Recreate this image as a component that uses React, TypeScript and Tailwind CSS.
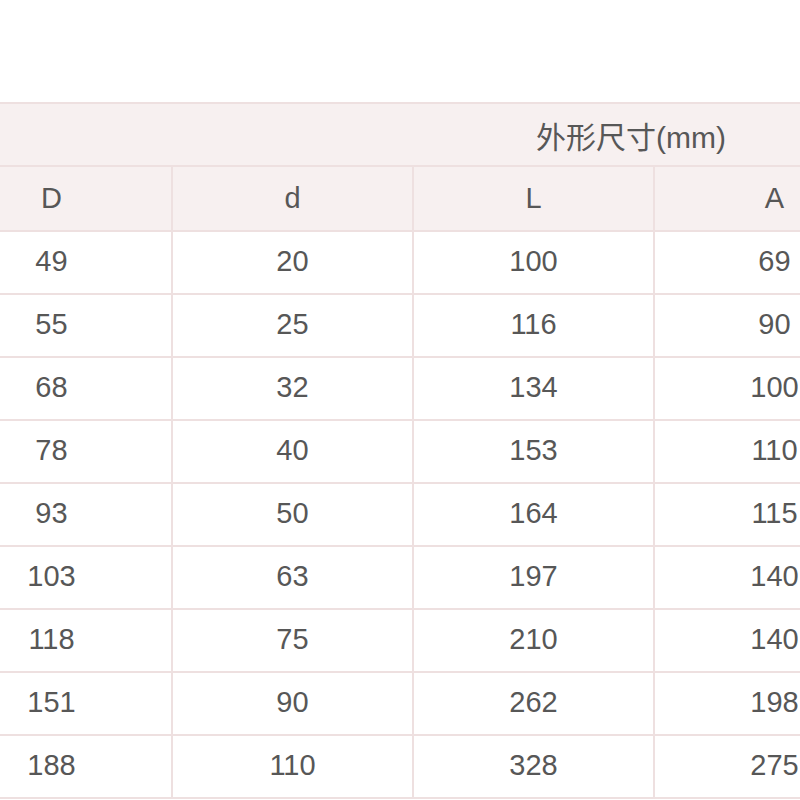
const heads = ['D', 'd', 'L', 'A', 'B', 'H'];

const rows = [
  ['49', '20', '100', '69', '', ''],
  ['55', '25', '116', '90', '', ''],
  ['68', '32', '134', '100', '', ''],
  ['78', '40', '153', '110', '', ''],
  ['93', '50', '164', '115', '', ''],
  ['103', '63', '197', '140', '', ''],
  ['118', '75', '210', '140', '', ''],
  ['151', '90', '262', '198', '', ''],
  ['188', '110', '328', '275', '', ''],
];

export default function App() {
  return (
    <div className="w-[800px] h-[800px] bg-white overflow-hidden pt-[102px]">
      <table
        className="ml-[-70px] w-[1446px] max-w-none border-collapse table-fixed text-[29px] text-[#575757]"
        style={{ fontFamily: '"Liberation Sans", "Noto Sans CJK SC", sans-serif' }}
      >
        <colgroup>
          {heads.map((h) => (
            <col key={h} className="w-[241px]" />
          ))}
        </colgroup>
        <thead>
          <tr className="h-[63px] bg-[#f7f0f0]">
            <th
              colSpan={6}
              className="border-2 border-[#eee0e0] font-normal text-center text-[30px] pr-[46px] pt-[6px]"
            >
              外形尺寸(mm)
            </th>
          </tr>
          <tr className="h-[65px] bg-[#f7f0f0]">
            {heads.map((h) => (
              <th key={h} className="border-2 border-[#eee0e0] font-normal text-center pt-[1px]">
                {h}
              </th>
            ))}
          </tr>
        </thead>
        <tbody>
          {rows.map((r, i) => (
            <tr key={i} className="h-[63px]">
              {r.map((v, j) => (
                <td key={j} className="border-2 border-[#eee0e0] text-center pb-[2px]">
                  {v}
                </td>
              ))}
            </tr>
          ))}
        </tbody>
      </table>
    </div>
  );
}
